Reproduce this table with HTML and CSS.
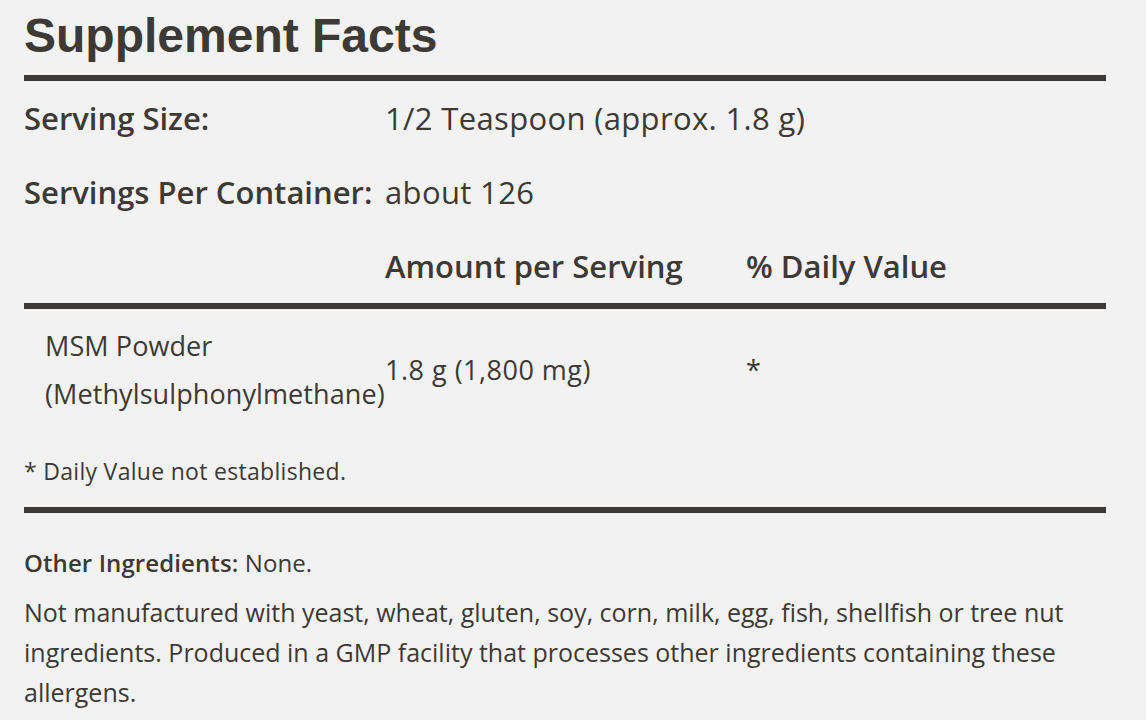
FILE: index.html
```html
<!DOCTYPE html>
<html lang="en">
<head>
<meta charset="utf-8">
<title>Supplement Facts</title>
<link rel="stylesheet" href="styles.css">
</head>
<body>
<section class="facts">
  <h2 class="facts-title">Supplement Facts</h2>
  <div class="facts-grid">
    <div class="row info">
      <div class="label">Serving Size:</div>
      <div class="value">1/2 Teaspoon (approx. 1.8 g)</div>
    </div>
    <div class="row info">
      <div class="label">Servings Per Container:</div>
      <div class="value">about 126</div>
    </div>
    <div class="row head">
      <div class="label"></div>
      <div class="col">Amount per Serving</div>
      <div class="col">% Daily Value</div>
    </div>
    <div class="row item">
      <div class="name">MSM Powder<br>(Methylsulphonylmethane)</div>
      <div class="amt">1.8 g (1,800 mg)</div>
      <div class="dv">*</div>
    </div>
  </div>
  <p class="note">* Daily Value not established.</p>
  <div class="other">
    <p class="other-line"><strong>Other Ingredients:</strong> None.</p>
    <p class="allergen">Not manufactured with yeast, wheat, gluten, soy, corn, milk, egg, fish, shellfish or tree nut ingredients. Produced in a GMP facility that processes other ingredients containing these allergens.</p>
  </div>
</section>
</body>
</html>
```

FILE: styles.css
```css
html, body {
  margin: 0;
  padding: 0;
  background: #f2f2f2;
}
body {
  font-family: "Open Sans", Lato, sans-serif;
  color: #3d3935;
}
.facts {
  width: 1082px;
  padding: 0 24px;
}
.facts-title {
  font-family: "Liberation Sans", Arial, sans-serif;
  font-weight: 700;
  font-size: 48px;
  line-height: 56px;
  margin: 0;
  padding: 8px 0 11px;
  border-bottom: 6px solid #3d3935;
}
.row {
  display: grid;
  grid-template-columns: 361px 361px 1fr;
  align-items: center;
}
.info, .head {
  height: 74px;
  font-size: 31px;
}
.info .value {
  grid-column: 2 / 4;
  letter-spacing: 0.35px;
}
.label, .col {
  font-weight: 600;
}
.head {
  border-bottom: 6px solid #3d3935;
}
.item {
  font-size: 27px;
  line-height: 48px;
  padding: 13px 0 11px;
  letter-spacing: 0.1px;
}
.amt {
  letter-spacing: 0.5px;
}
.name {
  padding-left: 21px;
}
.note {
  margin: 0;
  font-size: 23px;
  letter-spacing: 0.3px;
  line-height: 40px;
  padding: 22px 0 16px;
  border-bottom: 6px solid #3d3935;
}
.other {
  padding-top: 30px;
}
.other-line {
  margin: 0 0 9px;
  font-size: 24px;
  line-height: 40px;
  letter-spacing: 0.1px;
}
.other-line strong {
  font-weight: 600;
}
.allergen {
  margin: 0;
  font-size: 25px;
  line-height: 40px;
}
```
